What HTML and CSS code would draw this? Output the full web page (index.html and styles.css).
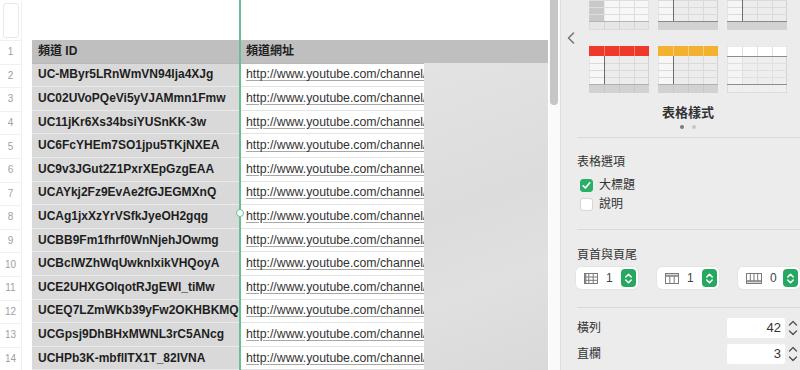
FILE: index.html
```html
<!DOCTYPE html>
<html lang="zh-Hant">
<head>
<meta charset="utf-8">
<title>Numbers</title>
<link rel="stylesheet" href="styles.css">
</head>
<body>
<div class="app">
  <div class="sheet">
    <div class="rownums">
      <div class="corner"><div class="corner-box"></div></div>
      <div class="rn">1</div><div class="rn">2</div><div class="rn">3</div><div class="rn">4</div>
      <div class="rn">5</div><div class="rn">6</div><div class="rn">7</div><div class="rn">8</div>
      <div class="rn">9</div><div class="rn">10</div><div class="rn">11</div><div class="rn">12</div>
      <div class="rn">13</div><div class="rn">14</div>
    </div>
    <div class="table">
      <div class="row head"><div class="c a">頻道 ID</div><div class="c b">頻道網址</div></div>
      <div class="row"><div class="c a">UC-MByr5LRnWmVN94Ija4XJg</div><div class="c b"><span class="link">http://www.youtube.com/channel/UC-MByr5LRnWmVN94Ija4XJg</span></div></div>
      <div class="row"><div class="c a">UC02UVoPQeVi5yVJAMmn1Fmw</div><div class="c b"><span class="link">http://www.youtube.com/channel/UC02UVoPQeVi5yVJAMmn1Fmw</span></div></div>
      <div class="row"><div class="c a">UC11jKr6Xs34bsiYUSnKK-3w</div><div class="c b"><span class="link">http://www.youtube.com/channel/UC11jKr6Xs34bsiYUSnKK-3w</span></div></div>
      <div class="row"><div class="c a">UC6FcYHEm7SO1jpu5TKjNXEA</div><div class="c b"><span class="link">http://www.youtube.com/channel/UC6FcYHEm7SO1jpu5TKjNXEA</span></div></div>
      <div class="row"><div class="c a">UC9v3JGut2Z1PxrXEpGzgEAA</div><div class="c b"><span class="link">http://www.youtube.com/channel/UC9v3JGut2Z1PxrXEpGzgEAA</span></div></div>
      <div class="row"><div class="c a">UCAYkj2Fz9EvAe2fGJEGMXnQ</div><div class="c b"><span class="link">http://www.youtube.com/channel/UCAYkj2Fz9EvAe2fGJEGMXnQ</span></div></div>
      <div class="row"><div class="c a">UCAg1jxXzYrVSfkJyeOH2gqg</div><div class="c b"><span class="link">http://www.youtube.com/channel/UCAg1jxXzYrVSfkJyeOH2gqg</span></div></div>
      <div class="row"><div class="c a">UCBB9Fm1fhrf0WnNjehJOwmg</div><div class="c b"><span class="link">http://www.youtube.com/channel/UCBB9Fm1fhrf0WnNjehJOwmg</span></div></div>
      <div class="row"><div class="c a">UCBclWZhWqUwknlxikVHQoyA</div><div class="c b"><span class="link">http://www.youtube.com/channel/UCBclWZhWqUwknlxikVHQoyA</span></div></div>
      <div class="row"><div class="c a">UCE2UHXGOlqotRJgEWl_tiMw</div><div class="c b"><span class="link">http://www.youtube.com/channel/UCE2UHXGOlqotRJgEWl_tiMw</span></div></div>
      <div class="row"><div class="c a">UCEQ7LZmWKb39yFw2OKHBKMQ</div><div class="c b"><span class="link">http://www.youtube.com/channel/UCEQ7LZmWKb39yFw2OKHBKMQ</span></div></div>
      <div class="row"><div class="c a">UCGpsj9DhBHxMWNL3rC5ANcg</div><div class="c b"><span class="link">http://www.youtube.com/channel/UCGpsj9DhBHxMWNL3rC5ANcg</span></div></div>
      <div class="row"><div class="c a">UCHPb3K-mbflITX1T_82IVNA</div><div class="c b"><span class="link">http://www.youtube.com/channel/UCHPb3K-mbflITX1T_82IVNA</span></div></div>
    </div>
    <div class="blur"></div>
    <div class="selline"><span class="knob"></span></div>
  </div>
  <div class="scroll"><div class="scroll-thumb"></div></div>
  <div class="panel">
    <div class="styles">
      <div class="chev">
        <svg width="8" height="12" viewBox="0 0 8 12"><path d="M6.5 1 L1.5 6 L6.5 11" fill="none" stroke="#777" stroke-width="1.6" stroke-linecap="round" stroke-linejoin="round"/></svg>
      </div>
      <div class="styles-main">
        <div class="thumbs">
          <svg class="th" viewBox="0 0 60 47">
            <rect x="0.5" y="0.5" width="59" height="46" fill="#f2f2f2" stroke="#d3d3d3"/>
            <rect x="0.5" y="0.5" width="15" height="37.5" fill="#c9c9c9"/>
            <rect x="15.5" y="0.5" width="44" height="37.5" fill="#f7f7f7"/>
            <g stroke="#dedede" stroke-width="1"><path d="M0 10.5H60M0 17.5H60M0 24.5H60M0 31.5H60M30.5 0V38M45.5 0V38"/></g>
            <path d="M0 38.5H60" stroke="#b5b5b5"/>
            <rect x="0.5" y="39" width="59" height="7.5" fill="#e6e6e6"/>
            <path d="M15.5 39V47M30.5 39V47M45.5 39V47" stroke="#d4d4d4"/>
          </svg>
          <svg class="th" viewBox="0 0 60 47">
            <rect x="0.5" y="0.5" width="59" height="46" fill="#ececec" stroke="#d3d3d3"/>
            <rect x="0.5" y="0.5" width="15" height="37.5" fill="#f6f6f6"/>
            <g stroke="#dadada"><path d="M0 10.5H60M0 17.5H60M0 24.5H60M0 31.5H60M30.5 0V38M45.5 0V38"/></g>
            <path d="M15.5 0V38" stroke="#6c6c6c"/>
            <path d="M0 38.5H60" stroke="#8a8a8a"/>
            <rect x="0.5" y="39" width="59" height="7.5" fill="#d2d2d2"/>
          </svg>
          <svg class="th" viewBox="0 0 60 47">
            <rect x="0.5" y="0.5" width="59" height="46" fill="#ececec" stroke="#d3d3d3"/>
            <rect x="0.5" y="0.5" width="15" height="37.5" fill="#f6f6f6"/>
            <g stroke="#dadada"><path d="M0 10.5H60M0 17.5H60M0 24.5H60M0 31.5H60M30.5 0V38M45.5 0V38"/></g>
            <path d="M15.5 0V38" stroke="#6c6c6c"/>
            <path d="M0 38.5H60" stroke="#8a8a8a"/>
            <rect x="0.5" y="39" width="59" height="7.5" fill="#d2d2d2"/>
          </svg>
          <svg class="th" viewBox="0 0 60 47">
            <rect x="0.5" y="0.5" width="59" height="46" fill="#ececec" stroke="#d3d3d3"/>
            <rect x="0.5" y="10" width="15" height="28" fill="#f7f7f7"/>
            <rect x="0" y="0" width="60" height="10" fill="#ef3a2b"/>
            <path d="M15.5 0V10M30.5 0V10M45.5 0V10" stroke="#f6806f"/>
            <g stroke="#dadada"><path d="M0 17.5H60M0 24.5H60M0 31.5H60M30.5 10V38M45.5 10V38"/></g>
            <path d="M15.5 10V38" stroke="#6c6c6c"/>
            <path d="M0 38.5H60" stroke="#b0b0b0"/>
            <rect x="0.5" y="39" width="59" height="7.5" fill="#d2d2d2"/>
            <path d="M15.5 39V47M30.5 39V47M45.5 39V47" stroke="#c8c8c8"/>
          </svg>
          <svg class="th" viewBox="0 0 60 47">
            <rect x="0.5" y="0.5" width="59" height="46" fill="#ececec" stroke="#d3d3d3"/>
            <rect x="0.5" y="10" width="15" height="28" fill="#f7f7f7"/>
            <rect x="0" y="0" width="60" height="10" fill="#f2b12f"/>
            <path d="M15.5 0V10M30.5 0V10M45.5 0V10" stroke="#f7cd76"/>
            <g stroke="#dadada"><path d="M0 17.5H60M0 24.5H60M0 31.5H60M30.5 10V38M45.5 10V38"/></g>
            <path d="M15.5 10V38" stroke="#6c6c6c"/>
            <path d="M0 38.5H60" stroke="#b0b0b0"/>
            <rect x="0.5" y="39" width="59" height="7.5" fill="#d2d2d2"/>
            <path d="M15.5 39V47M30.5 39V47M45.5 39V47" stroke="#c8c8c8"/>
          </svg>
          <svg class="th" viewBox="0 0 60 47">
            <rect x="0.5" y="0.5" width="59" height="46" fill="#eeeeee" stroke="#d3d3d3"/>
            <rect x="0.5" y="0.5" width="59" height="9.5" fill="#ffffff"/>
            <rect x="0.5" y="10" width="15" height="28" fill="#f5f5f5"/>
            <g stroke="#e0e0e0"><path d="M0 17.5H60M0 24.5H60M0 31.5H60M15.5 0V47M30.5 0V47M45.5 0V47"/></g>
            <path d="M0 10.5H60" stroke="#8c8c8c"/>
            <path d="M0 38.5H60" stroke="#8c8c8c"/>
            <rect x="0.5" y="39" width="59" height="7.5" fill="#f0f0f0" opacity="0.7"/>
          </svg>
        </div>
        <div class="styles-caption">表格樣式</div>
        <div class="dots"><span class="dot on"></span><span class="dot"></span></div>
      </div>
    </div>
    <div class="divider"></div>

    <div class="section">
      <div class="sec-title">表格選項</div>
      <div class="check-row first">
        <span class="cb checked"><svg width="13" height="13" viewBox="0 0 13 13"><path d="M3.2 6.8 L5.4 9 L9.8 3.8" fill="none" stroke="#fff" stroke-width="1.7" stroke-linecap="round" stroke-linejoin="round"/></svg></span>
        <span class="cb-label">大標題</span>
      </div>
      <div class="check-row">
        <span class="cb"></span>
        <span class="cb-label">說明</span>
      </div>
    </div>
    <div class="divider d2"></div>

    <div class="section">
      <div class="sec-title t3">頁首與頁尾</div>
      <div class="steppers">
        <div class="stepper">
          <svg class="st-icon" width="14" height="11" viewBox="0 0 14 11"><rect x="0.5" y="0.5" width="13" height="10" fill="none" stroke="#7a7a7a"/><path d="M0.5 4H13.5M0.5 7.3H13.5M4.8 0.5V10.5M9.2 0.5V10.5" stroke="#7a7a7a"/><path d="M1 1V10M1.8 1V10" stroke="#7a7a7a"/></svg>
          <span class="st-num">1</span>
          <span class="st-btn"><svg width="9" height="13" viewBox="0 0 9 13"><path d="M1.8 5 L4.5 2.3 L7.2 5 M1.8 8 L4.5 10.7 L7.2 8" fill="none" stroke="#fff" stroke-width="1.5" stroke-linecap="round" stroke-linejoin="round"/></svg></span>
        </div>
        <div class="stepper">
          <svg class="st-icon" width="14" height="11" viewBox="0 0 14 11"><rect x="0.5" y="0.5" width="13" height="10" fill="none" stroke="#7a7a7a"/><path d="M0.5 2.2H13.5M0.5 3.2H13.5M4.8 3V10.5M9.2 3V10.5" stroke="#7a7a7a"/></svg>
          <span class="st-num">1</span>
          <span class="st-btn"><svg width="9" height="13" viewBox="0 0 9 13"><path d="M1.8 5 L4.5 2.3 L7.2 5 M1.8 8 L4.5 10.7 L7.2 8" fill="none" stroke="#fff" stroke-width="1.5" stroke-linecap="round" stroke-linejoin="round"/></svg></span>
        </div>
        <div class="stepper">
          <svg class="st-icon" width="16" height="11" viewBox="0 0 16 11"><rect x="0.5" y="0.5" width="15" height="10" fill="none" stroke="#7a7a7a"/><path d="M0.5 7.8H15.5M0.5 8.8H15.5M4.3 0.5V8M8 0.5V8M11.7 0.5V8" stroke="#7a7a7a"/></svg>
          <span class="st-num">0</span>
          <span class="st-btn"><svg width="9" height="13" viewBox="0 0 9 13"><path d="M1.8 5 L4.5 2.3 L7.2 5 M1.8 8 L4.5 10.7 L7.2 8" fill="none" stroke="#fff" stroke-width="1.5" stroke-linecap="round" stroke-linejoin="round"/></svg></span>
        </div>
      </div>
    </div>
    <div class="divider d3"></div>

    <div class="section">
      <div class="field-row r1">
        <span class="field-label">橫列</span>
        <div class="field-ctrl">
          <span class="field-input">42</span>
          <svg class="arrows" width="10" height="20" viewBox="0 0 10 20"><path d="M1.5 7 L5 3.5 L8.5 7 M1.5 13 L5 16.5 L8.5 13" fill="none" stroke="#555" stroke-width="1.4" stroke-linecap="round" stroke-linejoin="round"/></svg>
        </div>
      </div>
      <div class="field-row">
        <span class="field-label">直欄</span>
        <div class="field-ctrl">
          <span class="field-input">3</span>
          <svg class="arrows" width="10" height="20" viewBox="0 0 10 20"><path d="M1.5 7 L5 3.5 L8.5 7 M1.5 13 L5 16.5 L8.5 13" fill="none" stroke="#555" stroke-width="1.4" stroke-linecap="round" stroke-linejoin="round"/></svg>
        </div>
      </div>
    </div>
  </div>
</div>
</body>
</html>
```

FILE: styles.css
```css
* { box-sizing: border-box; }
html, body { margin: 0; padding: 0; }
body {
  width: 800px;
  height: 370px;
  overflow: hidden;
  background: #ffffff;
  font-family: "Liberation Sans", "Noto Sans CJK TC", Arial, sans-serif;
  color: #222;
  line-height: 16px;
}
.app {
  display: flex;
  width: 800px;
  height: 370px;
}

/* ---------- spreadsheet ---------- */
.sheet {
  position: relative;
  width: 549px;
  flex: none;
  display: flex;
  background: #fff;
  overflow: hidden;
}
.rownums {
  width: 22px;
  flex: none;
  margin-right: 10px;
  display: flex;
  flex-direction: column;
  border-right: 1px solid #f0f0f0;
}
.corner {
  height: 40px;
  flex: none;
  padding: 3px 2px 2px 3px;
}
.corner-box {
  height: 100%;
  border: 1px solid #e8e8e8;
  border-radius: 3px;
}
.rn {
  height: 23.6px;
  flex: none;
  display: flex;
  align-items: center;
  justify-content: center;
  font-size: 10px;
  line-height: 12px;
  color: #a0a0a0;
  border-top: 1px solid #f0f0f0;
}
.table {
  margin-top: 40px;
  width: 516px;
  flex: none;
  display: flex;
  flex-direction: column;
}
.row {
  display: grid;
  grid-template-columns: 208px 308px;
  height: 23.6px;
  flex: none;
}
.c {
  display: flex;
  align-items: center;
  padding-left: 6px;
  white-space: nowrap;
  overflow: hidden;
  font-size: 12px;
  line-height: 15px;
  border-bottom: 1px solid #e6e6e6;
}
.c.a {
  background: #d9d9d9;
  font-weight: bold;
  color: #1e1e1e;
  border-bottom-color: #e9e9e9;
}
.c.b {
  background: #fff;
  font-size: 12.3px;
  color: #333;
  border-bottom-color: #e4e4e4;
}
.row.head .c {
  background: #bfbfbf;
  font-weight: bold;
  font-size: 12px;
  color: #1e1e1e;
  border-bottom-color: #b8b8b8;
}
.link {
  text-decoration: underline;
  text-decoration-color: #a8a8a8;
  text-underline-offset: 2px;
}
.blur {
  position: absolute;
  left: 424px;
  top: 63px;
  width: 124px;
  height: 307px;
  background: linear-gradient(160deg, #e3e3e3 0%, #dcdcdc 45%, #e0e0e0 70%, #d9d9d9 100%);
}
.selline {
  position: absolute;
  left: 239px;
  top: 0;
  width: 2px;
  height: 370px;
  background: #62c293;
}
.knob {
  position: absolute;
  left: -3px;
  top: 209px;
  width: 8px;
  height: 8px;
  border-radius: 50%;
  border: 1.5px solid #62c293;
  background: #fff;
}

/* ---------- scrollbar ---------- */
.scroll {
  width: 11px;
  flex: none;
  background: #fafafa;
  padding-left: 1px;
}
.scroll-thumb {
  width: 8px;
  height: 105px;
  background: #c6c6c6;
  border-radius: 0 0 4px 4px;
}

/* ---------- inspector panel ---------- */
.panel {
  flex: 1;
  background: #ececec;
  border-left: 1px solid #dedede;
  display: flex;
  flex-direction: column;
  color: #333;
  font-size: 12px;
  overflow: hidden;
}
.styles {
  display: flex;
}
.chev {
  width: 28px;
  flex: none;
  padding: 32px 0 0 6px;
}
.chev svg { display: block; }
.styles-main {
  display: flex;
  flex-direction: column;
  align-items: center;
  width: 198px;
}
.thumbs {
  margin-top: -17px;
  display: grid;
  grid-template-columns: repeat(3, 60px);
  grid-auto-rows: 47px;
  column-gap: 9px;
  row-gap: 16px;
}
.th { display: block; width: 60px; height: 47px; }
.styles-caption {
  margin-top: 12px;
  height: 16px;
  line-height: 16px;
  font-size: 13px;
  font-weight: bold;
  color: #333;
}
.dots {
  margin-top: 4px;
  display: flex;
  gap: 8px;
  height: 4px;
}
.dot {
  width: 4px;
  height: 4px;
  border-radius: 50%;
  background: #c8c8c8;
}
.dot.on { background: #7a7a7a; }
.divider {
  margin: 8px 0 0 16px;
  height: 1px;
  background: #d9d9d9;
  flex: none;
}
.divider.d2 { margin-top: 15px; }
.divider.d3 { margin-top: 18px; }
.section {
  padding-left: 16px;
  display: flex;
  flex-direction: column;
}
.sec-title {
  margin-top: 16px;
  height: 16px;
  line-height: 16px;
  font-size: 12px;
  color: #333;
}
.sec-title.t3 { margin-top: 17px; }
.check-row {
  display: flex;
  align-items: center;
  height: 19px;
  padding-left: 3px;
  gap: 6px;
}
.check-row.first { margin-top: 6px; }
.cb {
  width: 13px;
  height: 13px;
  border-radius: 3px;
  background: #fff;
  border: 1px solid #d6d6d6;
  display: flex;
}
.cb.checked {
  background: #2aae68;
  border-color: #2aae68;
}
.cb.checked svg { margin: -1px; }
.cb-label { font-size: 12px; line-height: 15px; color: #333; }

.steppers {
  margin-top: 4px;
  display: flex;
  gap: 19px;
  margin-left: -1px;
}
.stepper {
  width: 62px;
  height: 22px;
  flex: none;
  background: #fff;
  border-radius: 5px;
  display: flex;
  align-items: center;
  padding: 0 2px 0 8px;
  box-shadow: 0 0 0 0.5px #dcdcdc;
}
.st-icon { display: block; flex: none; }
.st-num {
  margin-left: 8px;
  font-size: 12px;
  line-height: 14px;
  color: #444;
}
.st-btn {
  margin-left: auto;
  width: 15px;
  height: 18px;
  border-radius: 4px;
  background: #27a862;
  display: flex;
  align-items: center;
  justify-content: center;
}
.st-btn svg { display: block; }

.field-row {
  display: flex;
  align-items: center;
  justify-content: space-between;
  height: 20px;
  margin-top: 6px;
}
.field-row.r1 { margin-top: 10px; }
.field-label { font-size: 12px; line-height: 15px; color: #333; }
.field-ctrl {
  display: flex;
  align-items: center;
  gap: 3px;
  padding-right: 2px;
}
.field-input {
  width: 58px;
  height: 20px;
  background: #fff;
  border-radius: 2px;
  text-align: right;
  padding-right: 4px;
  line-height: 20px;
  font-size: 13px;
  color: #333;
}
.arrows { display: block; }
```
